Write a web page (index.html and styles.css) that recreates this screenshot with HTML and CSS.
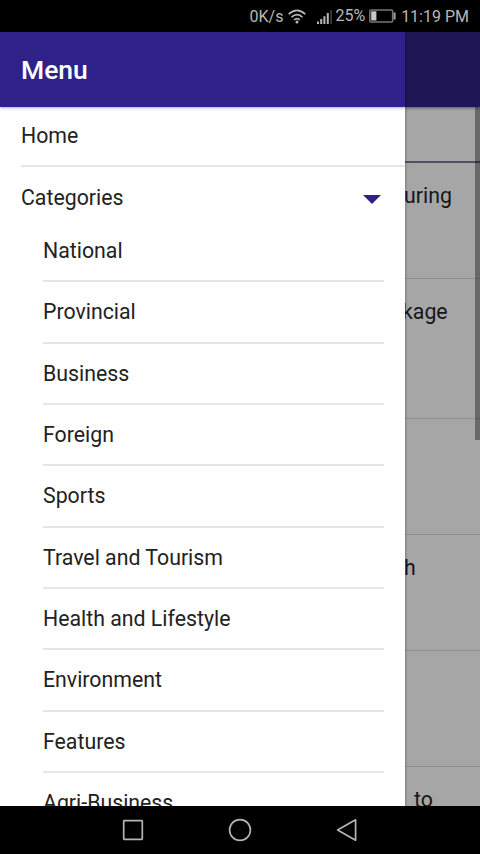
FILE: index.html
```html
<!DOCTYPE html>
<html lang="en">
<head>
<meta charset="utf-8">
<title>Menu</title>
<link rel="stylesheet" href="styles.css">
</head>
<body>
<div class="phone">
  <div class="status">
    <span class="rate">0K/s</span>
    <svg class="wifi" width="18" height="15" viewBox="0 0 18 15" fill="none" stroke="#b8b8b8" stroke-width="1.7">
      <path d="M.7 5.2Q9-2.6 17.3 5.2M3.5 8.2Q9 3 14.5 8.2M6.1 11Q9 8.3 11.9 11"/>
      <circle cx="9" cy="13" r="1.5" fill="#b8b8b8" stroke="none"/>
    </svg>
    <svg class="signal" width="15" height="14" viewBox="0 0 15 14" fill="#b8b8b8">
      <path d="M0 11.5h2V14H0zM3.2 9h2v5h-2zM6.4 6.2h2V14h-2zM9.8 3h2v11h-2z"/>
      <path d="M13.4 0h1.4v14h-1.4z" fill="#484848"/>
    </svg>
    <span class="percent">25%</span>
    <svg class="battery" width="27" height="14" viewBox="0 0 27 14">
      <rect x=".8" y=".9" width="22.8" height="12" rx="1" fill="none" stroke="#777" stroke-width="1.5"/>
      <path d="M2.2 2.3h5.2v9.2H2.2z" fill="#c8c8c8"/>
      <path d="M24.4 3.5h2.2v7h-2.2z" fill="#999"/>
    </svg>
    <span class="clock">11:19 PM</span>
  </div>
  <div class="screen">
    <div class="page">
      <div class="appbar"></div>
      <div class="tabs"></div>
      <div class="story s1">uring</div>
      <div class="story s2">kage</div>
      <div class="story s3"></div>
      <div class="story s4">h</div>
      <div class="story s5"></div>
      <div class="story s6">to</div>
      <div class="scrollbar"></div>
    </div>
    <div class="drawer">
      <div class="title">Menu</div>
      <div class="home">Home</div>
      <div class="categories"><span>Categories</span>
        <svg width="18" height="9" viewBox="0 0 18 9"><path d="M0 0h18L9 9z" fill="#2e2288"/></svg>
      </div>
      <div class="list">
        <div class="item">National</div>
        <div class="item">Provincial</div>
        <div class="item">Business</div>
        <div class="item">Foreign</div>
        <div class="item">Sports</div>
        <div class="item">Travel and Tourism</div>
        <div class="item">Health and Lifestyle</div>
        <div class="item">Environment</div>
        <div class="item">Features</div>
        <div class="item">Agri-Business</div>
      </div>
    </div>
  </div>
  <div class="nav">
    <svg width="22" height="22" viewBox="0 0 22 22"><rect x="1.7" y="1.7" width="18.6" height="18.6" rx=".6"/></svg>
    <svg width="24" height="24" viewBox="0 0 24 24"><circle cx="12" cy="12" r="10.4"/></svg>
    <svg width="22" height="24" viewBox="0 0 22 24"><path d="M19.6 1.8v20.4L1.6 12z"/></svg>
  </div>
</div>
</body>
</html>
```
FILE: styles.css
```css
* { box-sizing: border-box; }
body { margin: 0; font-family: Roboto, sans-serif; color: #222; }
.phone { width: 480px; height: 854px; display: flex; flex-direction: column; overflow: hidden; background: #000; }
.status { height: 32px; display: flex; align-items: center; justify-content: flex-end; padding-right: 11px; color: #b8b8b8; font-size: 16px; line-height: 32px; flex: none; }
.rate, .clock { padding-top: 1px; }
.wifi { margin: 0 11px 0 5px; }
.signal { margin: 2px 3px 0 0; }
.battery { margin: 0 5px 0 4px; }
.screen { position: relative; height: 774px; flex: none; overflow: hidden; }
.page { height: 100%; background: #a6a6a6; overflow: hidden; color: #161616; }
.appbar { height: 75px; background: #1f1656; box-shadow: 0 1px 3px #555; position: relative; }
.tabs { height: 56px; border-bottom: 2px solid #50506e; }
.story { border-bottom: 1px solid #909090; font-size: 21.3px; line-height: 26px; padding: 20px 0 0 404px; }
.s1 { height: 116px; }
.s2 { height: 140px; padding-left: 402px; }
.s3, .s4, .s5 { height: 116px; }
.s6 { height: 116px; padding-left: 414px; }
.scrollbar { position: absolute; top: 75px; right: 0; width: 5px; height: 333px; background: rgba(0,0,0,.37); }
.drawer { position: absolute; top: 0; left: 0; width: 405px; height: 774px; background: #fff; box-shadow: 0 0 3px rgba(0,0,0,.45); overflow: hidden; font-size: 21.3px; }
.title { height: 75px; padding-left: 21px; line-height: 76px; background: #2e2288; color: #fff; font-size: 26.5px; font-weight: 500; box-shadow: 0 1px 3px rgba(46,34,136,.4); }
.home { height: 60px; margin-left: 21px; line-height: 58px; border-bottom: 2px solid #e6e6e6; }
.categories { height: 54px; padding: 0 24px 0 21px; display: flex; align-items: center; justify-content: space-between; }
.categories span { line-height: 30px; margin-top: 8px; }
.categories svg { margin-top: 11px; }
.list { padding: 0 21px 0 43px; }
.item { height: 61.35px; line-height: 60px; border-bottom: 2px solid #e6e6e6; }
.nav { height: 48px; flex: none; display: flex; align-items: center; justify-content: center; gap: 84px; fill: none; stroke: #b4b4b4; stroke-width: 1.7; stroke-linejoin: round; }
```
